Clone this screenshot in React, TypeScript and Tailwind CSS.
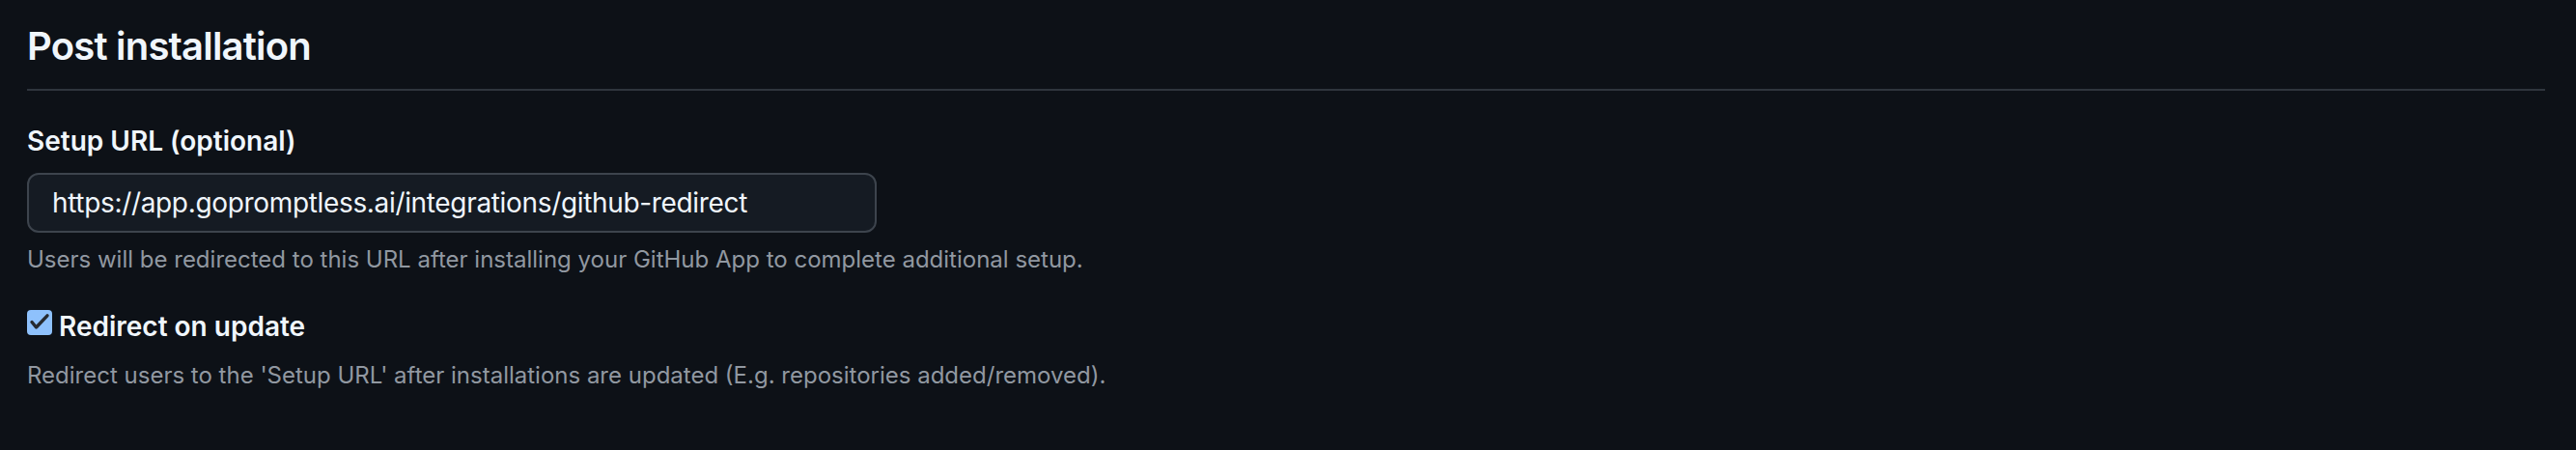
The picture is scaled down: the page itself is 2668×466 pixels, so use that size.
import React, { useState } from 'react';

const font = { fontFamily: 'Inter, "Liberation Sans", Arial, sans-serif' };

export default function App() {
  const [url, setUrl] = useState('https://app.gopromptless.ai/integrations/github-redirect');
  const [redirect, setRedirect] = useState(true);

  return (
    <div className="min-h-[466px] w-full bg-[#0d1117] pl-[28px] pr-[32px] pt-[18px] text-[#f0f6fc]" style={font}>
      <div className="border-b-2 border-[#2f353d] pb-[14px]">
        <h2 className="text-[40px] font-semibold leading-[60px] tracking-[-0.02em]">Post installation</h2>
      </div>

      <div className="mt-[31px]">
        <label htmlFor="setup-url" className="block text-[28px] font-semibold leading-[42px]">
          Setup URL (optional)
        </label>
        <input
          id="setup-url"
          type="text"
          value={url}
          onChange={(e) => setUrl(e.target.value)}
          className="mt-[12px] block h-[62px] w-[880px] rounded-[12px] border-2 border-[#3d444d] bg-[#151b23] px-[24px] text-[28px] tracking-[-0.012em] text-[#f0f6fc] focus:outline-none"
          style={font}
        />
        <p className="mt-[10px] text-[24px] leading-[36px] text-[#9198a1]">
          Users will be redirected to this URL after installing your GitHub App to complete additional setup.
        </p>
      </div>

      <div className="mt-[30px]">
        <label className="flex cursor-pointer items-start gap-[7px]">
          <span
            onClick={() => setRedirect(!redirect)}
            className={`mt-[4px] flex h-[26px] w-[26px] items-center justify-center rounded-[4px] ${
              redirect ? 'bg-[#8ec1fc]' : 'border-2 border-[#3d444d] bg-[#151b23]'
            }`}
          >
            {redirect && (
              <svg width="26" height="26" viewBox="0 0 26 26" fill="none">
                <path
                  d="M5 12.5 L9.5 18 L21 5.8"
                  stroke="#262a30"
                  strokeWidth="3.4"
                  strokeLinecap="round"
                  strokeLinejoin="round"
                />
              </svg>
            )}
          </span>
          <span className="text-[28px] font-semibold leading-[42px]">Redirect on update</span>
        </label>
        <p className="mt-[12px] text-[24px] leading-[36px] text-[#9198a1]">
          Redirect users to the 'Setup URL' after installations are updated (E.g. repositories added/removed).
        </p>
      </div>
    </div>
  );
}
